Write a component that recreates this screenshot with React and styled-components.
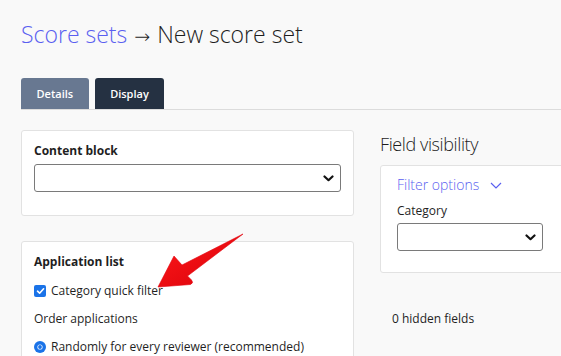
import React from "react";
import styled, { createGlobalStyle } from "styled-components";

const Global = createGlobalStyle`
  html, body { margin: 0; padding: 0; background: #f9f9f9; overflow: hidden; }
  body { font-family: "Open Sans", "Noto Sans", sans-serif; color: #222; }
  * { box-sizing: border-box; }
`;

const Page = styled.div`
  position: relative;
  width: 561px;
  height: 356px;
  padding: 17px 0 0 21px;
  overflow: hidden;
`;

const Title = styled.h1`
  margin: 0;
  height: 34px;
  font-size: 23px;
  line-height: 34px;
  font-weight: 300;
  color: #1d1d1d;
  white-space: nowrap;
`;

const Crumb = styled.span`
  color: #5a5ff0;
`;

const Sep = styled.span`
  font-family: "DejaVu Sans", "Liberation Sans", sans-serif;
  font-weight: 200;
  font-size: 19px;
  line-height: 0;
  margin: 0 1px;
`;

const TabBar = styled.div`
  display: flex;
  gap: 6px;
  margin-top: 27px;
  border-bottom: 1px solid #dcdcdc;
  height: 32px;
`;

const Tab = styled.div`
  height: 31px;
  padding: 0 15.5px;
  display: flex;
  align-items: center;
  font-size: 11px;
  font-weight: 600;
  color: #fff;
  border-radius: 3px 3px 0 0;
  background: ${(p) => (p.$active ? "#253142" : "#687891")};
`;

const Columns = styled.div`
  display: grid;
  grid-template-columns: 333px 333px;
  column-gap: 26px;
  margin-top: 20px;
`;

const Stack = styled.div`
  display: flex;
  flex-direction: column;
  gap: 25px;
`;

const Card = styled.div`
  background: #fff;
  border: 1px solid #e2e2e2;
  border-radius: 3px;
  padding: ${(p) => p.$pad || "11px 12px 23px"};
`;

const Label = styled.div`
  font-size: 12px;
  line-height: 17px;
  font-weight: ${(p) => (p.$bold ? 700 : 400)};
  color: #1f1f1f;
  margin-bottom: ${(p) => p.$mb || 0}px;
`;

const SelectBox = styled.div`
  height: 28px;
  width: ${(p) => p.$w};
  border: 1px solid #7a7a7a;
  border-radius: 3px;
  background: #fff;
  display: flex;
  align-items: center;
  justify-content: flex-end;
  padding-right: 6px;
`;

const Row = styled.label`
  display: flex;
  align-items: center;
  gap: 5px;
  font-size: 12px;
  line-height: 17px;
  color: #1f1f1f;
  margin-bottom: ${(p) => p.$mb || 0}px;
`;

const Box = styled.span`
  width: 12px;
  height: 12px;
  border-radius: ${(p) => (p.$round ? "50%" : "2px")};
  background: #1a73e8;
  display: inline-flex;
  align-items: center;
  justify-content: center;
  flex: none;
`;

const Heading = styled.h2`
  margin: 0;
  font-size: 18px;
  letter-spacing: -0.4px;
  line-height: 26px;
  font-weight: 300;
  color: #1d1d1d;
  margin-top: 1px;
  margin-bottom: 8px;
`;

const FilterToggle = styled.div`
  display: flex;
  align-items: center;
  gap: 11px;
  font-size: 14px;
  line-height: 20px;
  font-weight: 300;
  color: #5a5ff0;
  margin-bottom: 7px;
`;

const Hidden = styled.div`
  font-size: 12px;
  line-height: 17px;
  color: #1f1f1f;
  padding: 37px 0 0 12px;
`;

const Arrow = styled.svg`
  position: absolute;
  left: 0;
  top: 0;
  pointer-events: none;
`;

const Chevron = () => (
  <svg width="11" height="7" viewBox="0 0 11 7">
    <path d="M1.5 1.5 L5.5 5.2 L9.5 1.5" fill="none" stroke="#111" strokeWidth="2.2" strokeLinecap="round" strokeLinejoin="round" />
  </svg>
);

export default function App() {
  return (
    <>
      <Global />
      <Page>
        <Title>
          <Crumb>Score sets</Crumb> <Sep>→</Sep> New score set
        </Title>
        <TabBar>
          <Tab>Details</Tab>
          <Tab $active>Display</Tab>
        </TabBar>
        <Columns>
          <Stack>
            <Card>
              <Label $bold $mb={5}>Content block</Label>
              <SelectBox $w="307px"><Chevron /></SelectBox>
            </Card>
            <Card>
              <Label $bold $mb={12}>Application list</Label>
              <Row $mb={11}>
                <Box>
                  <svg width="9" height="8" viewBox="0 0 9 8">
                    <path d="M1.5 4.2 L3.6 6.2 L7.6 1.8" fill="none" stroke="#fff" strokeWidth="1.6" strokeLinecap="round" strokeLinejoin="round" />
                  </svg>
                </Box>
                Category quick filter
              </Row>
              <Label $mb={11}>Order applications</Label>
              <Row>
                <Box $round>
                  <svg width="12" height="12" viewBox="0 0 12 12">
                    <circle cx="6" cy="6" r="2.6" fill="#fff" />
                    <circle cx="6" cy="6" r="1.9" fill="#1a73e8" />
                  </svg>
                </Box>
                Randomly for every reviewer (recommended)
              </Row>
            </Card>
          </Stack>
          <div>
            <Heading>Field visibility</Heading>
            <Card $pad="9px 16px 21px">
              <FilterToggle>
                Filter options
                <svg width="12" height="7" viewBox="0 0 12 7">
                  <path d="M1 1 L6 6 L11 1" fill="none" stroke="#5a5ff0" strokeWidth="1.2" />
                </svg>
              </FilterToggle>
              <Label $mb={4}>Category</Label>
              <SelectBox $w="146px"><Chevron /></SelectBox>
            </Card>
            <Hidden>0 hidden fields</Hidden>
          </div>
        </Columns>
        <Arrow width="561" height="356" viewBox="0 0 561 356">
          <defs>
            <linearGradient id="ag" x1="0" y1="0" x2="1" y2="1">
              <stop offset="0" stopColor="#ff1a1a" />
              <stop offset="1" stopColor="#d8000a" />
            </linearGradient>
          </defs>
          <path
            d="M243 234 L182 265 L174 256 L158 287 L190.5 284.5 Q194 283 191.5 280 L187.5 276 Z"
            fill="url(#ag)"
            stroke="#e3000b"
            strokeWidth="0.6"
            strokeLinejoin="round"
          />
        </Arrow>
      </Page>
    </>
  );
}
